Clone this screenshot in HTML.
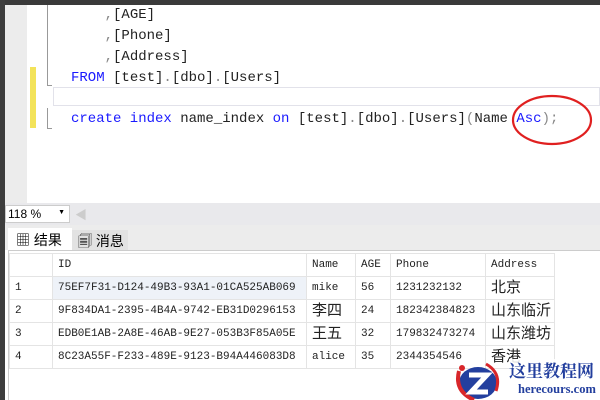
<!DOCTYPE html>
<html><head><meta charset="utf-8"><style>
*{margin:0;padding:0;box-sizing:border-box}
body{width:600px;height:400px;overflow:hidden;background:#fff;position:relative;font-family:"Liberation Sans","Noto Sans CJK SC",sans-serif}
.a{position:absolute}
.code{font-family:"Liberation Mono","Noto Sans CJK SC",monospace;font-size:14px;color:#222;white-space:pre;line-height:21px}
.k{color:#1a1aff}.g{color:#888}
table{border-collapse:collapse;table-layout:fixed;font-family:"Liberation Mono","Noto Sans CJK SC",monospace;font-size:11px;color:#222}
tr{height:23px}
td{border:1px solid #e4e4e4;height:23px;line-height:16px;padding:0 0 0 5px;white-space:nowrap;overflow:hidden}
td.z{font-family:"Liberation Sans","Noto Sans CJK SC",sans-serif;font-size:15px;line-height:16px}
</style></head><body>
<div class="a" style="left:0;top:0;width:600px;height:5px;background:#3a3a3a"></div>
<div class="a" style="left:0;top:0;width:5px;height:400px;background:#3d3d3d"></div>
<div class="a" style="left:5px;top:5px;width:22px;height:198px;background:#ececec"></div>
<div class="a" style="left:30px;top:67px;width:6px;height:61px;background:#f3e35a"></div>
<div class="a" style="left:47px;top:5px;width:1px;height:80px;background:#999"></div>
<div class="a" style="left:47px;top:85px;width:5px;height:1px;background:#999"></div>
<div class="a" style="left:47px;top:108px;width:1px;height:20px;background:#999"></div>
<div class="a" style="left:47px;top:128px;width:5px;height:1px;background:#999"></div>
<div class="a" style="left:53px;top:87px;width:547px;height:19px;border:1px solid #e2e2ea"></div>
<div class="a code" style="left:71px;top:5px"><span class="g">    ,</span>[AGE]
<span class="g">    ,</span>[Phone]
<span class="g">    ,</span>[Address]
<span class="k">FROM</span> [test]<span class="g">.</span>[dbo]<span class="g">.</span>[Users]
</div>
<div class="a code" style="left:71px;top:109px"><span class="k">create index</span> name_index <span class="k">on</span> [test]<span class="g">.</span>[dbo]<span class="g">.</span>[Users]<span class="g">(</span>Name <span class="k">Asc</span><span class="g">);</span></div>
<svg class="a" style="left:505px;top:90px" width="95" height="60"><ellipse cx="47" cy="30" rx="39" ry="24" fill="none" stroke="#e02020" stroke-width="2.2"/></svg>
<div class="a" style="left:5px;top:203px;width:595px;height:22px;background:#e9e9ec"></div>
<div class="a" style="left:5px;top:205px;width:65px;height:18px;background:#fff;border:1px solid #ccc;font-size:12px;padding:1px 2px">118 %<span style="position:absolute;right:4px;top:3px;font-size:7px">▼</span></div>
<div class="a" style="left:75px;top:206px;color:#ccc;font-size:12px">◀</div>
<div class="a" style="left:5px;top:225px;width:595px;height:25px;background:#ececec"></div>
<div class="a" style="left:8px;top:228px;width:64px;height:23px;background:#fff;font-size:14px;padding:2px 0 0 8px">▦ 结果</div>
<div class="a" style="left:72px;top:230px;height:20px;background:#e2e2e2;font-size:14px;padding:1px 0 0 6px;width:56px">🗐 消息</div>
<div class="a" style="left:8px;top:250px;width:592px;height:150px;border-left:1px solid #ccc;border-top:1px solid #ccc"></div>
<table class="a" style="left:9px;top:253px;width:545px">
<col style="width:43px"><col style="width:254px"><col style="width:49px"><col style="width:35px"><col style="width:95px"><col style="width:69px">
<tr><td></td><td>ID</td><td>Name</td><td>AGE</td><td>Phone</td><td>Address</td></tr>
<tr><td>1</td><td style="border:1px dotted #555;background:#eef2f8">75EF7F31-D124-49B3-93A1-01CA525AB069</td><td>mike</td><td>56</td><td>1231232132</td><td class="z">北京</td></tr>
<tr><td>2</td><td>9F834DA1-2395-4B4A-9742-EB31D0296153</td><td class="z">李四</td><td>24</td><td>182342384823</td><td class="z">山东临沂</td></tr>
<tr><td>3</td><td>EDB0E1AB-2A8E-46AB-9E27-053B3F85A05E</td><td class="z">王五</td><td>32</td><td>179832473274</td><td class="z">山东潍坊</td></tr>
<tr><td>4</td><td>8C23A55F-F233-489E-9123-B94A446083D8</td><td>alice</td><td>35</td><td>2344354546</td><td class="z">香港</td></tr>
</table>
<svg class="a" style="left:452px;top:360px" width="56" height="40"><ellipse cx="26" cy="23" rx="19" ry="16" fill="#233f9e"/><path d="M7 11 Q2 31 22 40" stroke="#d8262a" stroke-width="4" fill="none"/><path d="M44 31 Q50 13 34 4" stroke="#d8262a" stroke-width="3" fill="none"/><circle cx="10" cy="8" r="3" fill="#d8262a"/><path d="M17 15 L35 15 L19 32 L36 32" stroke="#fff" stroke-width="5" fill="none"/></svg>
<div class="a" style="left:509px;top:359px;white-space:nowrap;font-family:'Noto Serif CJK SC',serif;font-weight:bold;font-size:17px;line-height:22px;color:#233f9e;background:rgba(255,255,255,.85)">这里教程网</div>
<div class="a" style="left:518px;top:382px;white-space:nowrap;font-family:'Liberation Serif',serif;font-weight:bold;font-size:12.5px;color:#233f9e">herecours.com</div>
</body></html>
